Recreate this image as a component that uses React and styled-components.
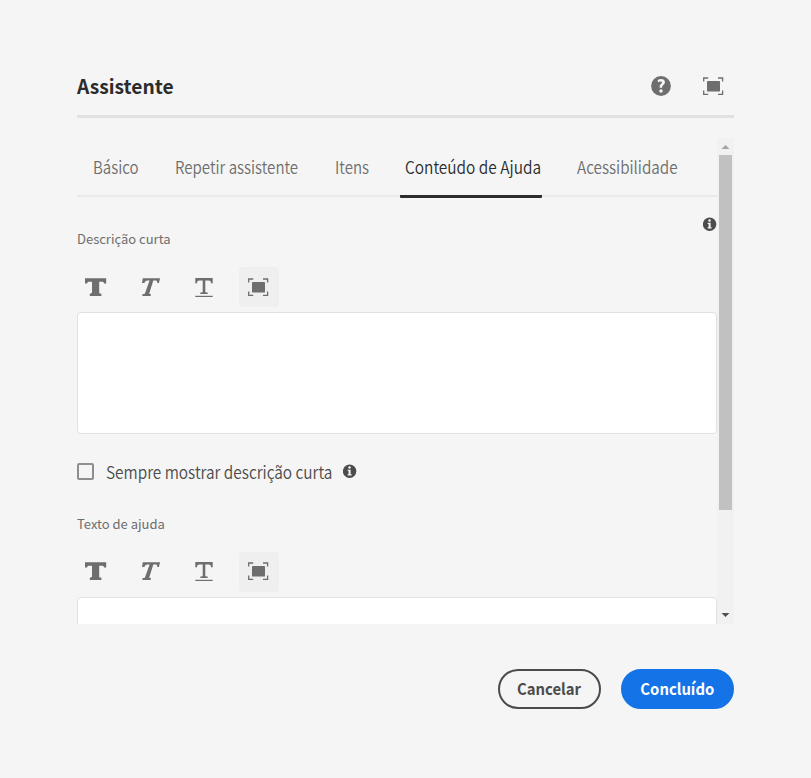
import React from "react";
import styled, { createGlobalStyle } from "styled-components";

const GlobalStyle = createGlobalStyle`
  *, *::before, *::after { box-sizing: border-box; }
  body {
    margin: 0;
    background: #f5f5f5;
    font-family: "Noto Sans CJK SC", "Noto Sans", sans-serif;
    color: #4b4b4b;
  }
`;

const Dialog = styled.main`
  display: flex;
  flex-direction: column;
  width: 811px;
  height: 778px;
  padding: 57px 77px 0;
  overflow: hidden;
`;

const Narrow = styled.span`
  display: inline-block;
  white-space: nowrap;
  transform: scaleX(${(p) => p.$scale});
  transform-origin: ${(p) => p.$origin || "left"} center;
`;

const Header = styled.header`
  display: flex;
  align-items: center;
  height: 61px;
  flex: none;
  border-bottom: 3px solid #e1e1e1;
`;

const Title = styled.h1`
  margin: 0;
  flex: 1;
  font-size: 19.2px;
  line-height: 24px;
  font-weight: 700;
  color: #2c2c2c;
`;

const HeaderActions = styled.div`
  display: flex;
  gap: 31px;
  padding-right: 10px;
  color: #6e6e6e;
  svg { display: block; }
`;

const Body = styled.section`
  display: flex;
  flex: none;
  height: 486px;
  margin-top: 20px;
`;

const Content = styled.div`
  width: 640px;
  height: 486px;
  overflow: hidden;
`;

const TabList = styled.nav`
  display: flex;
  height: 60px;
  padding-left: 10.5px;
  gap: 30px;
  box-shadow: inset 0 -1px 0 #f5f5f5, inset 0 -3px 0 #eaeaea;
`;

const Tab = styled.button`
  flex: none;
  width: ${(p) => p.$width}px;
  height: 60px;
  padding: 0 0 0 5.5px;
  border: 0;
  border-bottom: 3px solid ${(p) => (p.$active ? "#2c2c2c" : "transparent")};
  border-radius: 1px;
  background: none;
  font: inherit;
  font-weight: 350;
  font-size: 17px;
  line-height: 24px;
  text-align: left;
  white-space: nowrap;
  color: ${(p) => (p.$active ? "#2c2c2c" : "#6e6e6e")};
`;

const HelpRow = styled.div`
  display: flex;
  justify-content: flex-end;
  height: 31px;
  padding-top: 19px;
`;

const FieldLabel = styled.div`
  height: 20px;
  font-size: 13px;
  line-height: 20px;
  color: #6e6e6e;
`;

const Toolbar = styled.div`
  display: flex;
  align-items: center;
  gap: 14px;
  height: 40px;
  margin: ${(p) => p.$top}px 0 5px;
  --icon-lift: ${(p) => p.$lift || 0}px;
`;

const ToolButton = styled.button`
  display: flex;
  align-items: center;
  justify-content: center;
  width: 40px;
  height: 40px;
  padding: 0 2px var(--icon-lift) 0;
  border: 0;
  border-radius: 4px;
  color: #6e6e6e;
  background: ${(p) => (p.$filled ? "#efefef" : "transparent")};
`;

const Editor = styled.div`
  height: 122px;
  background: #fff;
  border: 1px solid #e1e1e1;
  border-radius: 4px;
`;

const CheckRow = styled.label`
  display: flex;
  align-items: center;
  height: 24px;
  margin: 26px 0 30px;
`;

const CheckBox = styled.span`
  width: 17px;
  height: 17px;
  margin-top: -1px;
  border: 2px solid #8e8e8e;
  border-radius: 2px;
`;

const CheckText = styled.span`
  width: 248.5px;
  padding: 0 0 1px 12px;
  font-size: 17px;
  font-weight: 350;
  line-height: 24px;
  white-space: nowrap;
  color: #4b4b4b;
`;

const InfoMark = styled.svg`
  display: block;
  flex: none;
  width: 14px;
  height: 14px;
  margin-top: ${(p) => p.$lift || 0}px;
`;

const ScrollBar = styled.div`
  display: flex;
  flex-direction: column;
  align-items: center;
  width: 17px;
  height: 486px;
  background: #f1f1f1;
`;

const ScrollArrow = styled.svg`
  display: block;
  flex: none;
  width: 17px;
  height: 17px;
`;

const ScrollTrack = styled.div`
  flex: 1;
  width: 13px;
`;

const ScrollThumb = styled.div`
  height: 355px;
  background: #c1c1c1;
`;

const Footer = styled.footer`
  display: flex;
  justify-content: flex-end;
  gap: 20px;
  margin-top: 45px;
`;

const PillButton = styled.button`
  display: flex;
  align-items: center;
  justify-content: center;
  width: ${(p) => (p.$primary ? 113 : 103)}px;
  height: 40px;
  padding: 0;
  border: 2px solid ${(p) => (p.$primary ? "#1473e6" : "#4b4b4b")};
  border-radius: 20px;
  background: ${(p) => (p.$primary ? "#1473e6" : "transparent")};
  color: ${(p) => (p.$primary ? "#fff" : "#4b4b4b")};
  font: inherit;
  font-size: 15.8px;
  line-height: 24px;
  font-weight: 700;
`;

const HelpIcon = () => (
  <svg width="20" height="20" viewBox="0 0 20 20">
    <circle cx="10" cy="10" r="9.9" fill="#6e6e6e" />
    <path d="M6.6 4C7.700 3.300 8.900 2.900 10.100 2.900c2.300 0 3.800 1.200 3.800 3.100 0 1.300-.7 2.200-1.600 3-.8.7-1.100 1.100-1.100 1.900v.8H8.600v-.9c0-1.300.5-2.100 1.400-2.900.7-.6.9-1 .9-1.500 0-.6-.5-1-1.300-1-.8 0-1.700.3-2.400.8z" fill="#f5f5f5" />
    <circle cx="10" cy="15" r="1.75" fill="#f5f5f5" />
  </svg>
);

const FullScreenIcon = () => (
  <svg width="22" height="20" viewBox="0 0 22 20">
    <rect x="5" y="5" width="13" height="10.500" rx=".4" fill="#6e6e6e" />
    <path d="M1.700 5.500V2h4.500M16 2h4.600v3.500M20.600 14.600V18.300H16M6.200 18.300H1.700v-3.700" fill="none" stroke="#6e6e6e" strokeWidth="1.3" />
  </svg>
);

const BoldIcon = () => (
  <svg width="22" height="20" viewBox="0 0 22 20">
    <path d="M0 1.200h21.200v5.300h-2.100c-.2-1.300-.8-1.800-2.200-1.800h-2.700v10.900c0 .9.300 1.100 2.200 1.200V19H4.800v-2.200c1.900-.1 2.200-.3 2.200-1.200V4.700H4.300c-1.400 0-2 .5-2.200 1.800H0z" fill="#6e6e6e" />
  </svg>
);

const ItalicIcon = () => (
  <svg width="20" height="20" viewBox="0 0 20 20">
    <path d="M2.800 1.200h17.300l-1.200 4.900h-1.700c.2-1.800-.2-2.600-1.700-2.600h-2.200L9.400 15.900c-.3.900 0 1.100 1.600 1.200l-.5 1.900H2.200l.5-1.900c1.700-.1 2.100-.3 2.400-1.200L9.600 3.500H7.500c-1.700 0-2.400.7-3.200 2.600H2z" fill="#6e6e6e" />
  </svg>
);

const UnderlineIcon = () => (
  <svg width="20" height="20" viewBox="0 0 20 20">
    <path d="M1.300 1.100h17.400v5.200h-1.700c-.2-2-.7-2.700-2.300-2.700h-3.400v10.900c0 .8.2 1 2.400 1.100v1.500H6.300v-1.500c2.200-.1 2.400-.3 2.400-1.100V3.600H5.300c-1.600 0-2.100.7-2.300 2.700H1.300z" fill="#6e6e6e" />
    <path d="M1.300 19.400h17.400" stroke="#6e6e6e" strokeWidth="1.200" />
  </svg>
);

const InfoIcon = ({ lift }) => (
  <InfoMark viewBox="0 0 14 14" $lift={lift}>
    <circle cx="6.600" cy="7.200" r="6.700" fill="#4b4b4b" />
    <circle cx="6.500" cy="3.500" r="1.250" fill="#f5f5f5" />
    <path d="M4.700 5.700h2.900v4.500h1v1.400H4.600v-1.400h1V7.100h-.9z" fill="#f5f5f5" />
  </InfoMark>
);

const FormatToolbar = ({ top, lift }) => (
  <Toolbar $top={top} $lift={lift}>
    <ToolButton aria-label="Negrito"><BoldIcon /></ToolButton>
    <ToolButton aria-label="Itálico"><ItalicIcon /></ToolButton>
    <ToolButton aria-label="Sublinhado"><UnderlineIcon /></ToolButton>
    <ToolButton aria-label="Tela cheia" $filled><FullScreenIcon /></ToolButton>
  </Toolbar>
);

const tabs = [
  { label: "Básico", width: 51.5, scale: 0.885 },
  { label: "Repetir assistente", width: 130, scale: 0.887 },
  { label: "Itens", width: 40.5, scale: 0.885 },
  { label: "Conteúdo de Ajuda", width: 142, scale: 0.907, active: true },
  { label: "Acessibilidade", width: 107, scale: 0.897 },
];

export default function App() {
  return (
    <>
      <GlobalStyle />
      <Dialog>
        <Header>
          <Title>Assistente</Title>
          <HeaderActions>
            <HelpIcon />
            <FullScreenIcon />
          </HeaderActions>
        </Header>
        <Body>
          <Content>
            <TabList>
              {tabs.map((t) => (
                <Tab key={t.label} $width={t.width} $active={t.active}>
                  <Narrow $scale={t.scale}>{t.label}</Narrow>
                </Tab>
              ))}
            </TabList>
            <HelpRow><InfoIcon /></HelpRow>
            <FieldLabel>Descrição curta</FieldLabel>
            <FormatToolbar top={18} />
            <Editor />
            <CheckRow>
              <CheckBox />
              <CheckText>
                <Narrow $scale={0.905}>Sempre mostrar descrição curta</Narrow>
              </CheckText>
              <InfoIcon lift={-2} />
            </CheckRow>
            <FieldLabel>Texto de ajuda</FieldLabel>
            <FormatToolbar top={18} lift={2} />
            <Editor />
          </Content>
          <ScrollBar>
            <ScrollArrow viewBox="0 0 17 17"><path d="M4.500 11L8.500 7l4 4z" fill="#a3a3a3" /></ScrollArrow>
            <ScrollTrack><ScrollThumb /></ScrollTrack>
            <ScrollArrow viewBox="0 0 17 17"><path d="M4.500 6l4 4 4-4z" fill="#505050" /></ScrollArrow>
          </ScrollBar>
        </Body>
        <Footer>
          <PillButton><Narrow $scale={0.94} $origin="center">Cancelar</Narrow></PillButton>
          <PillButton $primary><Narrow $scale={0.94} $origin="center">Concluído</Narrow></PillButton>
        </Footer>
      </Dialog>
    </>
  );
}
